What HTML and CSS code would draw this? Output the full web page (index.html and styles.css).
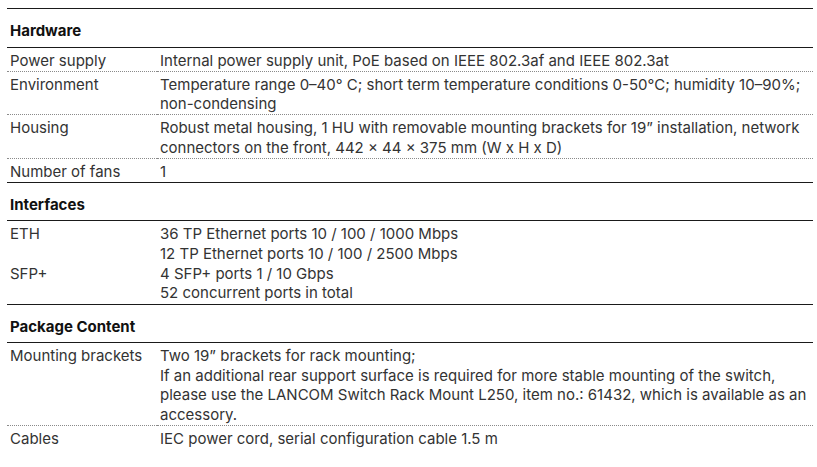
FILE: index.html
```html
<!DOCTYPE html>
<html lang="en">
<head>
<meta charset="utf-8">
<title>Specifications</title>
<link rel="stylesheet" href="styles.css">
</head>
<body>
<table class="spec">
  <colgroup><col class="c-label"><col class="c-value"></colgroup>
  <tbody>
    <tr class="head"><th colspan="2">Hardware</th></tr>
    <tr><td>Power supply</td><td>Internal power supply unit, PoE based on IEEE 802.3af and IEEE 802.3at</td></tr>
    <tr><td>Environment</td><td>Temperature range 0–40° C; short term temperature conditions 0-50°C; humidity 10–90%; non-condensing</td></tr>
    <tr><td>Housing</td><td>Robust metal housing, 1 HU with removable mounting brackets for 19” installation, network connectors on the front, 442 × 44 × 375 mm (W x H x D)</td></tr>
    <tr class="last"><td>Number of fans</td><td>1</td></tr>
    <tr class="head"><th colspan="2">Interfaces</th></tr>
    <tr class="grp"><td>ETH</td><td>36 TP Ethernet ports 10 / 100 / 1000 Mbps<br>12 TP Ethernet ports 10 / 100 / 2500 Mbps</td></tr>
    <tr class="last grp2"><td>SFP+</td><td>4 SFP+ ports 1 / 10 Gbps<br>52 concurrent ports in total</td></tr>
    <tr class="head"><th colspan="2">Package Content</th></tr>
    <tr><td>Mounting brackets</td><td>Two 19” brackets for rack mounting;<br>If an additional rear support surface is required for more stable mounting of the switch, please use the LANCOM Switch Rack Mount L250, item no.: 61432, which is available as an accessory.</td></tr>
    <tr class="last"><td>Cables</td><td>IEC power cord, serial configuration cable 1.5 m</td></tr>
  </tbody>
</table>
</body>
</html>
```

FILE: styles.css
```css
html, body {
  margin: 0;
  padding: 0;
  background: #ffffff;
}

body {
  font-family: Inter, "Liberation Sans", sans-serif;
  font-size: 15px;
  line-height: 19.6px;
  color: #333333;
}

.spec {
  margin: 8px 0 0 7px;
  width: 806px;
  border-collapse: collapse;
  table-layout: fixed;
}

.c-label { width: 150px; }

.spec th {
  text-align: left;
  font-weight: 700;
  color: #111111;
  padding: 12px 3px 6px;
  border-top: 1px solid #1a1a1a;
  border-bottom: 1px solid #1a1a1a;
}

.spec td {
  vertical-align: top;
  padding: 3px 3px 0.4px;
  border-bottom: 1px dotted #8a8a8a;
}

.spec tr.last td {
  border-bottom: none;
}

.spec tr.grp td {
  border-bottom: none;
  padding-bottom: 0;
}

.spec tr.grp2 td {
  padding-top: 0;
  padding-bottom: 1px;
}
```
